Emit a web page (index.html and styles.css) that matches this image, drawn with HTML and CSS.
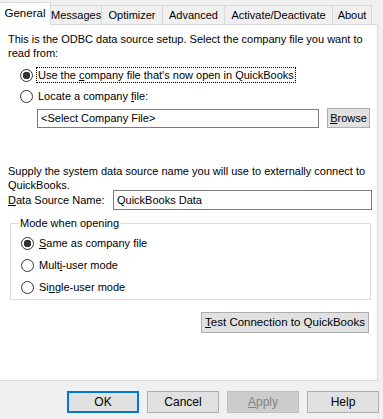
FILE: index.html
```html
<!DOCTYPE html>
<html>
<head>
<meta charset="utf-8">
<link rel="stylesheet" href="styles.css">
</head>
<body>
<div class="dialog">
  <div class="tabs">
    <div class="tab selected w-general">General</div>
    <div class="tab w-messages">Messages</div>
    <div class="tab w-optimizer">Optimizer</div>
    <div class="tab w-advanced">Advanced</div>
    <div class="tab w-activate">Activate/Deactivate</div>
    <div class="tab w-about">About</div>
  </div>
  <div class="panel">
    <p class="intro">This is the ODBC data source setup. Select the company file you want to<br>read from:</p>
    <div class="radio-row first">
      <span class="radio checked"></span>
      <span class="label focus">Use the <u>c</u>ompany file that's now open in QuickBooks</span>
    </div>
    <div class="radio-row">
      <span class="radio"></span>
      <span class="label">Locate a company <u>f</u>ile:</span>
    </div>
    <div class="file-row">
      <div class="textbox file-box">&lt;Select Company File&gt;</div>
      <div class="btn browse"><u>B</u>rowse</div>
    </div>
    <p class="supply">Supply the system data source name you will use to externally connect to<br>QuickBooks.</p>
    <div class="dsn-row">
      <span class="dsn-label"><u>D</u>ata Source Name:</span>
      <div class="textbox dsn-box">QuickBooks Data</div>
    </div>
    <fieldset class="group">
      <legend class="legend">Mode when opening</legend>
      <div class="radio-row g">
        <span class="radio checked"></span>
        <span class="label"><u>S</u>ame as company file</span>
      </div>
      <div class="radio-row g">
        <span class="radio"></span>
        <span class="label">Mult<u>i</u>-user mode</span>
      </div>
      <div class="radio-row g">
        <span class="radio"></span>
        <span class="label">Si<u>n</u>gle-user mode</span>
      </div>
    </fieldset>
    <div class="test-row">
      <div class="btn test"><u>T</u>est Connection to QuickBooks</div>
    </div>
  </div>
  <div class="footer">
    <div class="btn foot default">OK</div>
    <div class="btn foot">Cancel</div>
    <div class="btn foot disabled"><u>A</u>pply</div>
    <div class="btn foot">Help</div>
  </div>
</div>
</body>
</html>
```
FILE: styles.css
```css
html, body {
  margin: 0;
  padding: 0;
}
body {
  width: 383px;
  height: 419px;
  overflow: hidden;
  background: #f0f0f0;
  font-family: "Liberation Sans", Arial, sans-serif;
  font-size: 11px;
  color: #000;
}
u {
  text-decoration: underline;
  text-underline-offset: 1px;
}
.dialog {
  display: flex;
  flex-direction: column;
  width: 383px;
  height: 419px;
}
.tabs {
  display: flex;
  align-items: flex-end;
  height: 24px;
  position: relative;
  z-index: 2;
}
.tab {
  box-sizing: border-box;
  height: 19px;
  border: 1px solid #d9d9d9;
  border-bottom: none;
  border-left: none;
  background: #f0f0f0;
  font-size: 11px;
  line-height: 18px;
  text-align: center;
  white-space: nowrap;
  color: #000;
}
.tab.selected {
  background: #fff;
  margin-bottom: -1px;
  height: 23px;
  line-height: 20px;
  font-size: 11.5px;
}
.w-general { width: 51px; }
.w-messages { width: 51px; }
.w-optimizer { width: 61px; }
.w-advanced { width: 62px; }
.w-activate { width: 108px; }
.w-about { width: 39px; }
.panel {
  box-sizing: border-box;
  width: 378px;
  height: 357px;
  background: #fff;
  border: 1px solid #d9d9d9;
  border-left: none;
  padding: 0 0 0 8px;
}
.intro {
  margin: 7px 0 0 0;
  line-height: 14px;
}
.radio-row {
  display: flex;
  align-items: center;
  height: 18px;
  margin-top: 3px;
  padding-left: 12px;
}
.radio-row.first {
  margin-top: 6px;
}
.radio {
  box-sizing: border-box;
  width: 13px;
  height: 13px;
  border: 1px solid #333;
  border-radius: 50%;
  background: #fff;
  flex: none;
}
.radio.checked {
  background: radial-gradient(circle, #333 0 3.5px, #fff 4px);
}
.label {
  display: block;
  margin-left: 4px;
  line-height: 14px;
  padding: 0 1px;
}
.label.focus {
  outline: 1px dotted #000;
}
.file-row {
  display: flex;
  align-items: center;
  margin-top: 3px;
  padding-left: 29px;
}
.textbox {
  box-sizing: border-box;
  height: 19px;
  border: 1px solid #7a7a7a;
  background: #fff;
  line-height: 17px;
  padding-left: 3px;
}
.file-box {
  width: 282px;
}
.btn {
  box-sizing: border-box;
  border: 1px solid #adadad;
  background: #e1e1e1;
  text-align: center;
  white-space: nowrap;
}
.browse {
  width: 43px;
  height: 20px;
  line-height: 18px;
  margin-left: 8px;
  font-size: 11px;
}
.supply {
  margin: 36px 0 0 0;
  line-height: 14px;
}
.dsn-row {
  display: flex;
  align-items: center;
  margin-top: -2px;
}
.dsn-label {
  width: 105px;
}
.dsn-box {
  width: 259px;
  height: 20px;
  line-height: 18px;
}
.group {
  margin: 6px 0 0 2px;
  width: 361px;
  box-sizing: border-box;
  height: 84px;
  border: 1px solid #dcdcdc;
  padding: 0;
}
.legend {
  padding: 0 1px;
  margin-left: 8px;
  line-height: 14px;
}
.radio-row.g {
  padding-left: 10px;
  height: 18px;
  margin-top: 4px;
}
.test-row {
  display: flex;
  justify-content: flex-end;
  padding-right: 8px;
  margin-top: 12px;
}
.test {
  width: 168px;
  height: 21px;
  line-height: 19px;
  font-size: 11.5px;
}
.footer {
  display: flex;
  padding: 10px 0 0 67px;
  gap: 8px;
}
.foot {
  width: 72px;
  height: 22px;
  line-height: 20px;
  font-size: 12px;
}
.foot.default {
  border: 2px solid #0078d7;
  line-height: 18px;
}
.foot.disabled {
  background: #cccccc;
  border-color: #bfbfbf;
  color: #838383;
}
```
